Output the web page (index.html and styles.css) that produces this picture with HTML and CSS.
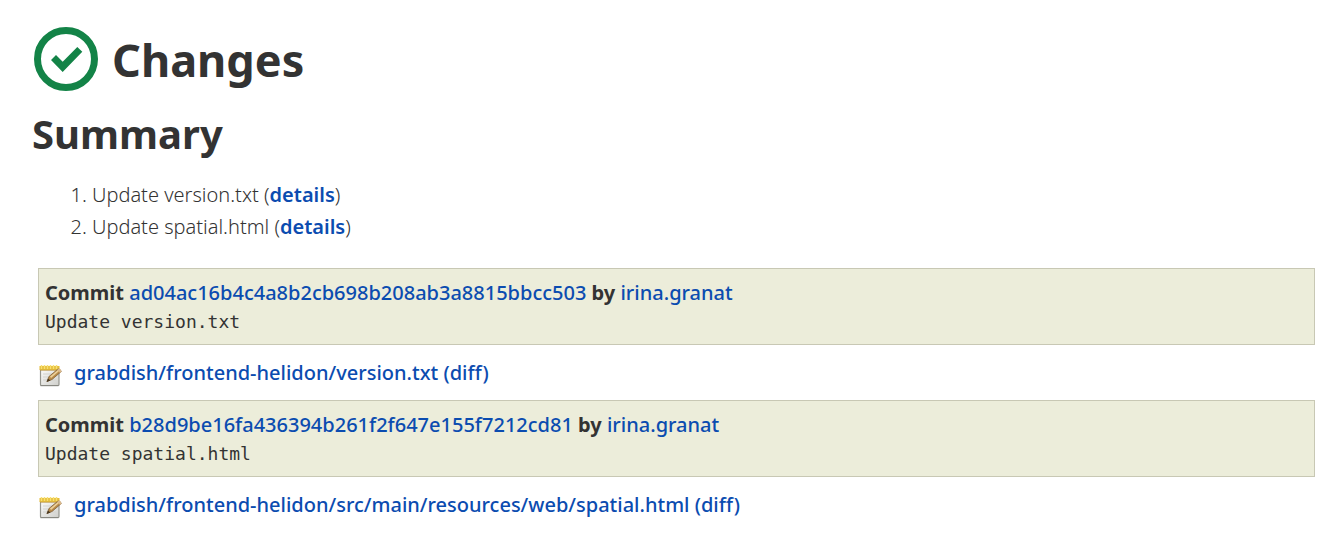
FILE: index.html
```html
<!DOCTYPE html>
<html lang="en">
<head>
<meta charset="utf-8">
<title>Changes</title>
<link rel="stylesheet" href="styles.css">
</head>
<body>
<svg class="defs" aria-hidden="true">
  <linearGradient id="paper" x1="0" y1="0" x2="1" y2="1"><stop offset="0" stop-color="#fdfdfc"/><stop offset="1" stop-color="#cfcfcb"/></linearGradient>
  <symbol id="note" viewBox="0 0 24 24">
    <path d="M2 5h19v17.500H3z" fill="url(#paper)"/>
    <path d="M2.500 6v15.500q0 1 1 1h16.500q1 0 1-1V6" fill="none" stroke="#96968f" stroke-width="1.200"/>
    <path d="M2.500 22.700h18" stroke="#85857e"/>
    <path d="M5 11h10M5 14h7M5 17h4M14 17h4" stroke="#d3d3cf"/>
    <path d="M1.500 3h20v4h-20z" fill="#e5bd38"/>
    <path d="M3.500 2v4M6.500 2v4M9.500 2v4M12.500 2v4M15.500 2v4M18.500 2v4" stroke="#f8df72" stroke-width="1.500"/>
    <path d="M2 7.300h19" stroke="#bd9745" stroke-width=".8"/>
    <path d="M9 18.500l2-5L20 6q2-.5 3.300 2.500L14 16.500z" fill="#b88a48" stroke="#806036" stroke-width=".8"/>
    <path d="M12 13.500L20.500 6.500l1.200 1L13 15z" fill="#ecd09a"/>
    <path d="M19.300 6.600L21 5.500q2.300.5 2.500 3L22 10z" fill="#d9b98d"/>
    <path d="M8.500 19l1.500-3.500 2.500 2z" fill="#493923"/>
  </symbol>
</svg>
<main class="page">
  <h1 class="title">
    <svg class="status" viewBox="0 0 64 64" role="img" aria-label="Success"><circle cx="32" cy="32" r="28.500" fill="none" stroke="#138347" stroke-width="7"/><path d="M17 33l5-5 6.700 6.700L43.300 20l5 4.800L28.700 45z" fill="#138347"/></svg>
    Changes
  </h1>
  <h2 class="subtitle">Summary</h2>
  <ol class="summary">
    <li>Update version.txt (<a href="#c1">details</a>)</li>
    <li>Update spatial.html (<a href="#c2">details</a>)</li>
  </ol>
  <section class="commits">
    <article class="commit" id="c1">
      <div class="message">
        <div class="heading"><b>Commit</b> <a href="#c1">ad04ac16b4c4a8b2cb698b208ab3a8815bbcc503</a> <b>by</b> <a href="#user">irina.granat</a></div>
        <pre class="comment">Update version.txt</pre>
      </div>
      <div class="file">
        <svg class="edit" viewBox="0 0 24 24" aria-hidden="true"><use href="#note"/></svg>
        <span><a href="#f1">grabdish/frontend-helidon/version.txt</a> <a href="#d1">(diff)</a></span>
      </div>
    </article>
    <article class="commit" id="c2">
      <div class="message">
        <div class="heading"><b>Commit</b> <a href="#c2">b28d9be16fa436394b261f2f647e155f7212cd81</a> <b>by</b> <a href="#user">irina.granat</a></div>
        <pre class="comment">Update spatial.html</pre>
      </div>
      <div class="file">
        <svg class="edit" viewBox="0 0 24 24" aria-hidden="true"><use href="#note"/></svg>
        <span><a href="#f2">grabdish/frontend-helidon/src/main/resources/web/spatial.html</a> <a href="#d2">(diff)</a></span>
      </div>
    </article>
  </section>
</main>
</body>
</html>
```
FILE: styles.css
```css
body { margin: 0; background: #fff; color: #333; font: 20px/32px "Noto Sans", sans-serif; }
a { color: #0b4cb0; text-decoration: none; font-weight: 500; }
.page { padding: 27px 25px 24px 32px; }
.title { display: flex; align-items: center; gap: 14px; margin: 0; padding-left: 2px; font-size: 45px; line-height: 66px; }
.status { width: 64px; height: 64px; align-self: flex-start; }
.subtitle { margin: 14px 0 0; font-size: 40px; line-height: 54px; }
.summary { margin: 18px 0 0; padding-left: 60px; font-weight: 300; }
.summary a { font-weight: 600; }
.commits { padding: 25px 0 0 6px; }
.message { border: 1px solid #c8c8b4; background: #ecedda; padding: 8px 6px; }
.heading { line-height: 31px; }
.comment { margin: 0; padding-bottom: 1px; font: 18px/27px "DejaVu Sans Mono", monospace; }
.file { display: flex; align-items: center; gap: 12px; height: 55px; padding-top: 1px; box-sizing: border-box; }
.edit { width: 24px; height: 24px; margin-top: 4px; }
.defs { position: absolute; width: 0; height: 0; }
```
